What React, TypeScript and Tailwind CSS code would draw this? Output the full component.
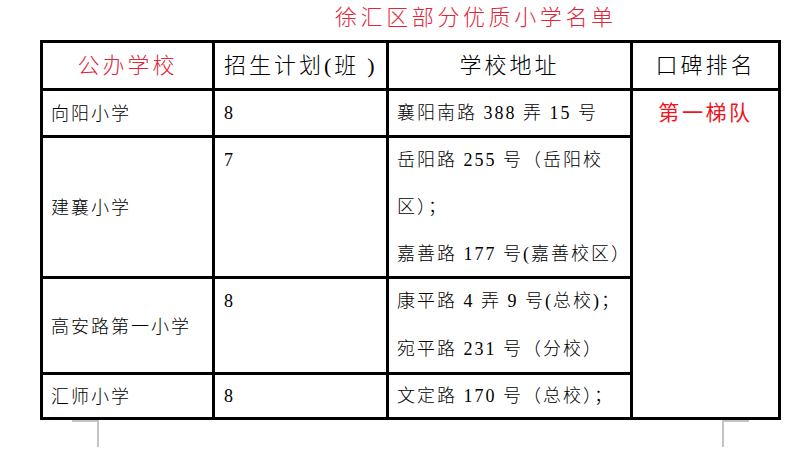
const rows = [
  { name: "向阳小学", plan: "8", addr: ["襄阳南路 388 弄 15 号"], h: "h-[47px]", lead: "leading-[44px]" },
  { name: "建襄小学", plan: "7", addr: ["岳阳路 255 号（岳阳校", "区）；", "嘉善路 177 号(嘉善校区）"], h: "h-[141px]", lead: "leading-[44px]" },
  { name: "高安路第一小学", plan: "8", addr: ["康平路 4 弄 9 号(总校)；", "宛平路 231 号（分校）"], h: "h-[96px]", lead: "leading-[45px]" },
  { name: "汇师小学", plan: "8", addr: ["文定路 170 号（总校）；"], h: "h-[45px]", lead: "leading-[42px]" },
]

export default function App() {
  return (
    <div className="w-[800px] h-[456px] bg-white overflow-hidden font-['Liberation_Serif','Noto_Sans_CJK_SC',serif]">
      {/* 标题 */}
      <div className="h-[40px] pl-[335px] pt-[4px]">
        <h1 className="text-[22px] leading-[28px] tracking-[3.6px] text-[#e2263a] font-light">徐汇区部分优质小学名单</h1>
      </div>

      {/* 表格 */}
      <table className="ml-[40px] w-[740px] table-fixed border-collapse border-[3px] border-black text-black font-['Liberation_Serif','Noto_Sans_CJK_SC',serif]">
        <colgroup>
          <col className="w-[172px]" />
          <col className="w-[174px]" />
          <col className="w-[244px]" />
          <col className="w-[148px]" />
        </colgroup>
        <thead>
          <tr className="h-[48px]">
            <th className="border-[3px] border-black text-center font-light text-[22px] tracking-[3px] text-[#e2263a]">公办学校</th>
            <th className="border-[3px] border-black pl-[9px] text-left font-light text-[22px] tracking-[3px] whitespace-nowrap">
              招生计划(班<span className="ml-[8px]">)</span>
            </th>
            <th className="border-[3px] border-black text-center font-light text-[22px] tracking-[3px]">学校地址</th>
            <th className="border-[3px] border-black text-center font-light text-[22px] tracking-[3px]">口碑排名</th>
          </tr>
        </thead>
        <tbody className="text-[18px] tracking-[2px] font-light">
          {rows.map((r, i) => (
            <tr key={r.name} className={r.h}>
              <td className="border-[3px] border-black pl-[8px] pt-[3px] align-middle whitespace-nowrap">{r.name}</td>
              <td className={`border-[3px] border-black pl-[9px] align-top ${r.lead}`}>{r.plan}</td>
              <td className={`border-[3px] border-black pl-[8px] align-top whitespace-nowrap space-y-[3px] ${r.lead}`}>
                {r.addr.map(a => <div key={a}>{a}</div>)}
              </td>
              {i === 0 && (
                <td rowSpan={4} className="border-[3px] border-black align-top text-center leading-[44px] text-[21px] tracking-[2.6px] font-normal text-[#f0141e]">
                  第一梯队
                </td>
              )}
            </tr>
          ))}
        </tbody>
      </table>

      {/* 页边角标 */}
      <div className="flex">
        <div className="ml-[72px] w-[27px] h-[27px] border-t-2 border-r-2 border-[#c4c4c4]" />
        <div className="ml-[623px] w-[27px] h-[27px] border-t-2 border-l-2 border-[#c4c4c4]" />
      </div>
    </div>
  )
}
